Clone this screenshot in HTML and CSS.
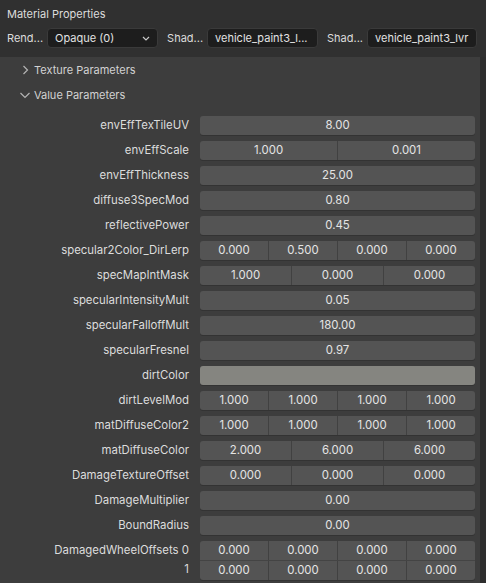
FILE: index.html
```html
<!DOCTYPE html>
<html lang="en">
<head>
    <meta charset="UTF-8">
    <title>Material Properties</title>
    <link rel="stylesheet" href="styles.css">
</head>
<body>
    <div class="editor">
        <div class="header">
            <div class="title">Material Properties</div>
            <div class="toolbar">
                <span class="tlabel">Rend...</span>
                <div class="dropdown">
                    <span>Opaque (0)</span>
                    <svg class="caret" width="8" height="5" viewBox="0 0 8 5"><path d="M1 1 L4 4 L7 1" fill="none" stroke="#c8c8c8" stroke-width="1.2"/></svg>
                </div>
                <span class="tlabel">Shad...</span>
                <div class="textbox">vehicle_paint3_l...</div>
                <span class="tlabel">Shad...</span>
                <div class="textbox">vehicle_paint3_lvr</div>
            </div>
        </div>

        <div class="panel">
            <div class="subhead">
                <svg class="chev" width="10" height="10" viewBox="0 0 10 10"><path d="M3.5 1 L7.5 5 L3.5 9" fill="none" stroke="#b4b4b4" stroke-width="1.2"/></svg>
                Texture Parameters
            </div>
            <div class="subhead">
                <svg class="chev" width="10" height="10" viewBox="0 0 10 10"><path d="M0.5 3 L5 7.5 L9.5 3" fill="none" stroke="#b4b4b4" stroke-width="1.2"/></svg>
                Value Parameters
            </div>

            <div id="params" class="params">
                <!-- rows built below -->
            </div>
        </div>
        <div class="scrollbar"></div>
    </div>

    <script>
        // property name, values (null = colour swatch)
        const params = [
            ["envEffTexTileUV", ["8.00"]],
            ["envEffScale", ["1.000", "0.001"]],
            ["envEffThickness", ["25.00"]],
            ["diffuse3SpecMod", ["0.80"]],
            ["reflectivePower", ["0.45"]],
            ["specular2Color_DirLerp", ["0.000", "0.500", "0.000", "0.000"]],
            ["specMapIntMask", ["1.000", "0.000", "0.000"]],
            ["specularIntensityMult", ["0.05"]],
            ["specularFalloffMult", ["180.00"]],
            ["specularFresnel", ["0.97"]],
            ["dirtColor", null],
            ["dirtLevelMod", ["1.000", "1.000", "1.000", "1.000"]],
            ["matDiffuseColor2", ["1.000", "1.000", "1.000", "1.000"]],
            ["matDiffuseColor", ["2.000", "6.000", "6.000"]],
            ["DamageTextureOffset", ["0.000", "0.000", "0.000"]],
            ["DamageMultiplier", ["0.00"]],
            ["BoundRadius", ["0.00"]]
        ];

        const wheelOffsets = [
            ["0.000", "0.000", "0.000", "0.000"],
            ["0.000", "0.000", "0.000", "0.000"]
        ];

        function fieldHtml(values) {
            if (values === null) return `<div class="field swatch"></div>`;
            return `<div class="field">${values.map(v => `<span class="cell">${v}</span>`).join('')}</div>`;
        }

        const list = document.getElementById("params");
        params.forEach(([name, values]) => {
            const row = document.createElement("div");
            row.className = "row";
            row.innerHTML = `<label>${name}</label>${fieldHtml(values)}`;
            list.appendChild(row);
        });

        // array property: rows stacked without gap
        const group = document.createElement("div");
        group.className = "row-group";
        wheelOffsets.forEach((values, i) => {
            const row = document.createElement("div");
            row.className = "row";
            const name = i === 0 ? "DamagedWheelOffsets 0" : String(i);
            row.innerHTML = `<label>${name}</label>${fieldHtml(values)}`;
            group.appendChild(row);
        });
        list.appendChild(group);
    </script>
</body>
</html>
```

FILE: styles.css
```css
html, body {
    margin: 0;
    padding: 0;
    background: #303030;
}
body {
    font-family: Inter, 'Liberation Sans', sans-serif;
    font-size: 11px;
    color: #dcdcdc;
    width: 486px;
    height: 583px;
    overflow: hidden;
}
.editor {
    display: grid;
    grid-template-columns: 480px 6px;
    grid-template-rows: 57px 1fr;
    height: 583px;
}
.header {
    grid-column: 1 / 3;
    background: #303030;
    padding: 0 7px;
}
.title {
    height: 28px;
    line-height: 28px;
}
.toolbar {
    display: flex;
    align-items: center;
    height: 20px;
}
.tlabel {
    margin-right: 4px;
    white-space: nowrap;
}
.dropdown, .textbox {
    background: #1d1d1d;
    border: 1px solid #3a3a3a;
    border-radius: 4px;
    box-sizing: border-box;
    height: 20px;
    display: flex;
    align-items: center;
    padding: 0 7px;
    color: #e2e2e2;
    white-space: nowrap;
}
.dropdown {
    width: 111px;
    justify-content: space-between;
    margin-right: 9px;
}
.textbox {
    width: 111px;
    margin-right: 9px;
}
.textbox:last-child {
    margin-right: 0;
    width: 110px;
}
.caret {
    margin-top: 1px;
}
.panel {
    background: #3d3d3d;
}
.scrollbar {
    background: #2e2e2e;
}
.subhead {
    height: 25px;
    display: flex;
    align-items: center;
    padding-left: 20px;
    color: #d2d2d2;
}
.chev {
    margin-right: 4px;
}
.params {
    display: flex;
    flex-direction: column;
    gap: 6px;
    padding-top: 9px;
    padding-right: 5px;
}
.row-group {
    display: flex;
    flex-direction: column;
}
.row {
    display: flex;
    height: 19px;
}
.row label {
    width: 189px;
    flex: none;
    text-align: right;
    line-height: 19px;
    margin-right: 11px;
    white-space: nowrap;
    font-size: 11.4px;
}
.field {
    flex: 1;
    display: flex;
    background: #545454;
    border-radius: 3px;
    box-shadow: 0 1px 0 #333333;
    overflow: hidden;
}
.row-group .row:first-child .field {
    border-radius: 3px 3px 0 0;
    box-shadow: none;
}
.row-group .row:last-child .field {
    border-radius: 0 0 3px 3px;
    border-top: 1px solid #444444;
    height: 19px;
}
.cell {
    flex: 1;
    text-align: center;
    line-height: 19px;
    color: #e4e4e4;
    font-size: 11.4px;
}
.cell + .cell {
    border-left: 1px solid #414141;
}
.swatch {
    background: #858580;
}
```
